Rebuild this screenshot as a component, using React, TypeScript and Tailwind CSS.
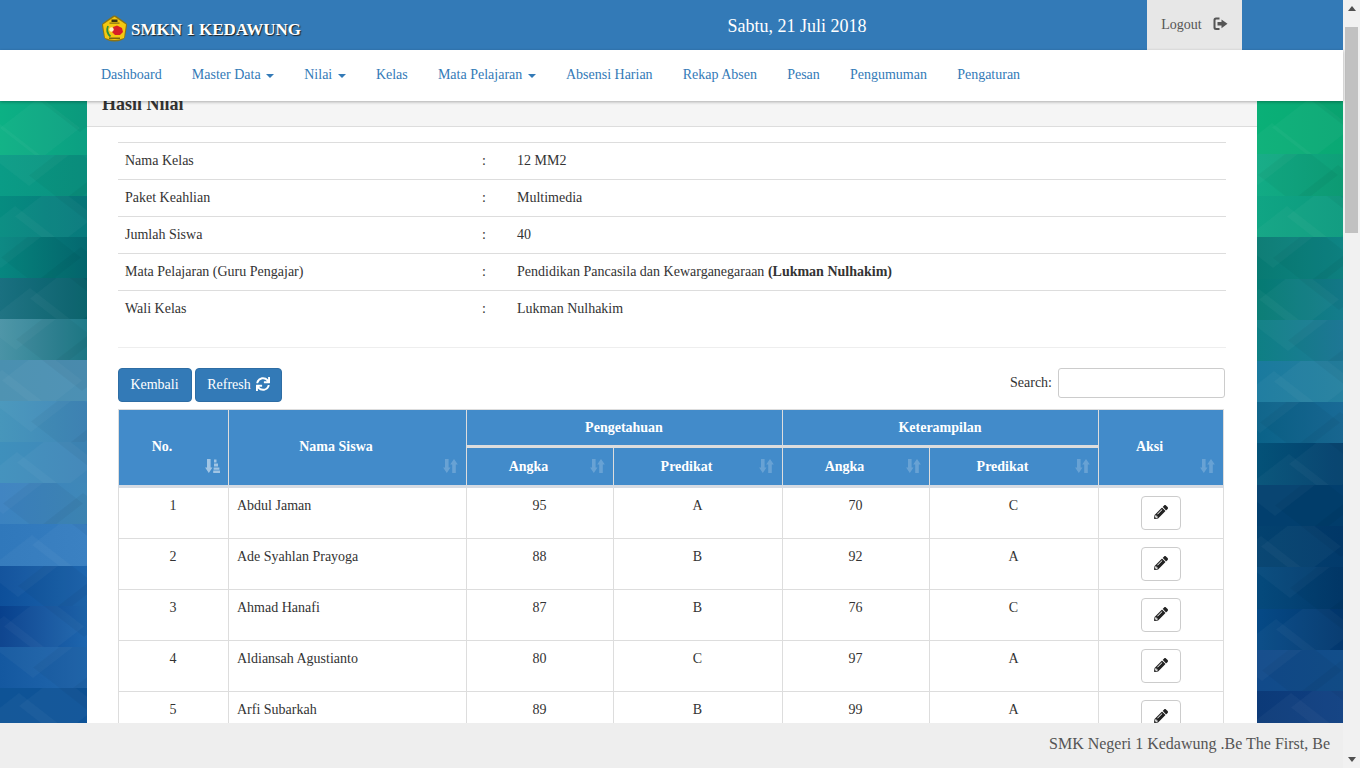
import React from "react";
import { FaPencilAlt, FaSync } from "react-icons/fa";

type B = [number, number, string, string];
const leftBands: B[] = [
  [0, 54, "#0cb184", "#0c9f82"], [54, 41, "#0a9c86", "#0b9180"], [95, 41, "#068c80", "#08797c"], [136, 41, "#078780", "#04686f"],
  [177, 41, "#1a7080", "#045e68"], [218, 41, "#4a93a6", "#1f7a88"], [259, 41, "#4a90b0", "#4c90b4"], [300, 41, "#4796bb", "#3f86b8"],
  [341, 41, "#3f90bc", "#3f86b8"], [382, 41, "#3b82c0", "#3f88b8"], [423, 42, "#3078bb", "#357dc0"], [465, 40, "#0d4f9a", "#1e66ae"],
  [505, 41, "#08408c", "#1e66ae"], [546, 41, "#1458a0", "#2268ae"], [587, 36, "#0e5396", "#0e5398"],
];
const rightBands: B[] = [
  [0, 53, "#0ab077", "#0aa874"], [53, 42, "#12ab85", "#0ea078"], [95, 41, "#10a584", "#0c9a7e"], [136, 42, "#087a72", "#0e8484"],
  [178, 41, "#057a72", "#147c8c"], [219, 41, "#0e7f84", "#1f7b9a"], [260, 41, "#1a7a9e", "#25809f"], [301, 41, "#0a6288", "#196a96"],
  [342, 42, "#045278", "#023f6c"], [384, 41, "#023f6e", "#023f6e"], [425, 41, "#03426f", "#023a6b"], [466, 42, "#054a7c", "#02386a"],
  [508, 41, "#064a86", "#02376e"], [549, 41, "#114a8a", "#124e8a"], [590, 33, "#0c3a78", "#0f3f82"],
];

function Band({ id, bands, w }: { id: string; bands: B[]; w: number }) {
  return (
    <svg width={w} height={623} className="block shrink-0">
      <defs>
        {bands.map((b, i) => (
          <linearGradient key={i} id={`${id}${i}`} x1="0" x2="1" y1="0" y2="0">
            <stop offset="0" stopColor={b[2]} />
            <stop offset="1" stopColor={b[3]} />
          </linearGradient>
        ))}
      </defs>
      {bands.map((b, i) => {
        const off = (i * 29 + (id === "r" ? 15 : 0)) % 43;
        const h = b[1];
        const d = (cx: number, cy: number) => `${cx - 40},${cy} ${cx},${cy - 31} ${cx + 40},${cy} ${cx},${cy + 31}`;
        return (
          <svg key={i} x={0} y={b[0]} width={w} height={h}>
            <rect width={w} height={h} fill={`url(#${id}${i})`} />
            <polygon points={d(off, i % 2 ? 0 : h)} fill="#fff" opacity={0.03} />
            <polygon points={d(off + 40, h / 2)} fill={i % 2 ? "#000" : "#fff"} opacity={0.03} />
            <polygon points={d(off + 80, i % 2 ? h : 0)} fill="#000" opacity={0.035} />
          </svg>
        );
      })}
    </svg>
  );
}

function Logo() {
  return (
    <svg width="27" height="28" viewBox="0 0 27 28" className="block shrink-0">
      <path d="M13.5 .5 Q15 .5 16 1.5 L25 8 Q26.5 9 26 11 L24 22 Q23.5 24 21 25 Q13.5 28 6 25 Q3.5 24 3 22 L1 11 Q.5 9 2 8 L11 1.5 Q12 .5 13.5 .5 Z" fill="#8a7416" />
      <path d="M13.5 1.8 L25 9.4 L23 23 Q13.5 27 4 23 L2 9.4 Z" fill="#f4c811" />
      <rect x="10.5" y="4.5" width="6" height="2.5" fill="#3b3410" />
      <rect x="8.5" y="7.6" width="10" height="1" fill="#6b5d14" />
      <path d="M12 12 L16 10.5 L21 13 L22 17 L19 20 L14 20 L11 17 Z" fill="#d81f26" />
      <path d="M7 11 Q4.5 17 9.5 21.5" stroke="#2c8f3c" strokeWidth="1.8" fill="none" />
      <circle cx="10.5" cy="14.5" r="2.2" fill="#fff4c0" />
      <rect x="8" y="22.6" width="11" height="1.2" fill="#5c4f10" />
    </svg>
  );
}

function LogoutIcon() {
  return (
    <svg width="15" height="14" viewBox="0 0 15 14" className="block">
      <path d="M6.5 0.5 H3 Q0.5 .5 .5 3 V10.5 Q.5 13 3 13 H6.5 V11 H3.2 Q2.5 11 2.5 10.3 V3.2 Q2.5 2.5 3.2 2.5 H6.5 Z" fill="#555" />
      <path d="M4.5 5 H8.5 V2.4 L14.5 6.8 L8.5 11.2 V8.6 H4.5 Z" fill="#555" />
    </svg>
  );
}

function SortIcon({ active }: { active?: boolean }) {
  return (
    <svg width="15" height="14" viewBox="0 0 15 14" className={active ? "absolute right-[8px] bottom-[12px] opacity-50" : "absolute right-[8px] bottom-[12px] opacity-20"}>
      <path d="M2 0 H5.6 V8.5 H7.5 L3.8 14 L.1 8.5 H2 Z" fill="#fff" />
      {active ? (
        <path d="M9 .5 H11.5 V3.5 H9 Z M9 4.5 H13 V7.5 H9 Z M8.6 8.5 H14.4 V10.8 H8.6 Z M8.2 11.5 H15 V14 H8.2 Z" fill="#fff" />
      ) : (
        <path d="M9.2 14 H12.8 V5.5 H14.8 L11 0 L7.2 5.5 H9.2 Z" fill="#fff" />
      )}
    </svg>
  );
}

const navItems: [string, boolean][] = [
  ["Dashboard", false], ["Master Data", true], ["Nilai", true], ["Kelas", false], ["Mata Pelajaran", true],
  ["Absensi Harian", false], ["Rekap Absen", false], ["Pesan", false], ["Pengumuman", false], ["Pengaturan", false],
];

const info: [string, React.ReactNode][] = [
  ["Nama Kelas", "12 MM2"],
  ["Paket Keahlian", "Multimedia"],
  ["Jumlah Siswa", "40"],
  ["Mata Pelajaran (Guru Pengajar)", <>Pendidikan Pancasila dan Kewarganegaraan <b>(Lukman Nulhakim)</b></>],
  ["Wali Kelas", "Lukman Nulhakim"],
];

const rows: [number, string, number, string, number, string][] = [
  [1, "Abdul Jaman", 95, "A", 70, "C"],
  [2, "Ade Syahlan Prayoga", 88, "B", 92, "A"],
  [3, "Ahmad Hanafi", 87, "B", 76, "C"],
  [4, "Aldiansah Agustianto", 80, "C", 97, "A"],
  [5, "Arfi Subarkah", 89, "B", 99, "A"],
];

const th = "relative border border-[#ddd] bg-[#428bca] text-white font-bold text-center p-0 pr-[23px] align-middle";
const thTall = "relative border border-[#ddd] bg-[#428bca] text-white font-bold text-center p-0 pr-[23px] pb-[2px] align-middle";
const td = "border border-[#ddd] p-2 pr-[9px] align-top text-center leading-[20px]";

export default function App() {
  return (
    <div className="flex h-[768px] w-[1360px] overflow-hidden bg-white text-[14px] text-[#333] font-['Liberation_Serif','Times_New_Roman',serif]">
      <div className="flex h-full w-[1343px] flex-col">
        <header className="flex h-[50px] shrink-0 items-center bg-[#337ab7] pl-[101px]">
          <div className="mt-[8px] flex w-[420px] items-center gap-[3px]">
            <Logo />
            <span className="mt-[2px] text-[17px] font-bold whitespace-nowrap text-white [text-shadow:1px_1px_1px_#222]">SMKN 1 KEDAWUNG</span>
          </div>
          <div className="mt-[2px] w-[626px] pr-[74px] text-center text-[18px] text-white">Sabtu, 21 Juli 2018</div>
          <div className="flex h-full w-[95px] items-center justify-center gap-[11px] bg-[#e7e7e7] pb-[2px] text-[#555]">
            <span>Logout</span>
            <LogoutIcon />
          </div>
        </header>
        <nav className="relative z-10 flex h-[51px] shrink-0 items-center gap-[30.15px] bg-white pb-[2px] pl-[101px] text-[#337ab7] shadow-[0_1px_3px_rgba(0,0,0,0.3)]">
          {navItems.map(([label, caret]) => (
            <span key={label} className="flex items-center gap-[5.5px] whitespace-nowrap">
              {label}
              {caret && <span className="mt-[2px] h-0 w-0 border-x-[4px] border-t-[4px] border-x-transparent border-t-[#337ab7]" />}
            </span>
          ))}
        </nav>
        <main className="flex h-[622px] shrink-0 overflow-hidden">
          <Band id="l" bands={leftBands} w={87} />
          <section className="w-[1170px] shrink-0 overflow-hidden bg-white">
            <div className="h-[26px] overflow-hidden border-b border-[#ddd] bg-[#f5f5f5] pl-[15px]">
              <h3 className="-mt-[6px] text-[18px] leading-[18px] font-bold text-[#333]">Hasil Nilai</h3>
            </div>
            <div className="px-[31px] pt-[15px]">
              <table className="w-[1108px] table-fixed border-collapse">
                <colgroup>
                  <col className="w-[356px]" />
                  <col className="w-[35px]" />
                  <col />
                </colgroup>
                <tbody>
                  {info.map(([k, v]) => (
                    <tr key={k} className="border-t border-[#ddd]">
                      <td className="p-2 pl-[7px] leading-[20px]">{k}</td>
                      <td className="p-2 leading-[20px]">:</td>
                      <td className="p-2 leading-[20px]">{v}</td>
                    </tr>
                  ))}
                </tbody>
              </table>
              <hr className="my-[20px] border-0 border-t border-[#eee]" />
              <div className="flex items-start justify-between pr-[1px]">
                <div className="flex gap-[3px]">
                  <button className="h-[34px] w-[74px] rounded border border-[#2e6da4] bg-[#337ab7] pr-[1px] pb-[2px] text-white">Kembali</button>
                  <button className="flex h-[34px] w-[87px] items-center justify-center gap-[4px] rounded border border-[#2e6da4] bg-[#337ab7] pb-[2px] text-white">
                    Refresh <FaSync className="ml-[1px] text-[14px]" />
                  </button>
                </div>
                <label className="flex items-center gap-[6px]">
                  <span className="mb-[2px]">Search:</span>
                  <input readOnly className="h-[30px] w-[167px] rounded-[3px] border border-[#ccc] bg-white" />
                </label>
              </div>
              <table className="mt-[7px] w-[1105px] table-fixed border-collapse">
                <colgroup>
                  <col className="w-[110px]" />
                  <col className="w-[238px]" />
                  <col className="w-[147px]" />
                  <col className="w-[169px]" />
                  <col className="w-[147px]" />
                  <col className="w-[169px]" />
                  <col className="w-[125px]" />
                </colgroup>
                <thead>
                  <tr className="h-[37px]">
                    <th rowSpan={2} className={thTall}>No.<SortIcon active /></th>
                    <th rowSpan={2} className={thTall}>Nama Siswa<SortIcon /></th>
                    <th colSpan={2} className="border border-b-[3px] border-[#ddd] bg-[#428bca] p-0 pr-[1px] text-center font-bold text-white">Pengetahuan</th>
                    <th colSpan={2} className="border border-b-[3px] border-[#ddd] bg-[#428bca] p-0 pr-[1px] text-center font-bold text-white">Keterampilan</th>
                    <th rowSpan={2} className={thTall}>Aksi<SortIcon /></th>
                  </tr>
                  <tr className="h-[40px] border-b-[3px] border-[#d5dbe3]">
                    {["Angka", "Predikat", "Angka", "Predikat"].map((t, i) => (
                      <th key={i} className={th}>{t}<SortIcon /></th>
                    ))}
                  </tr>
                </thead>
                <tbody>
                  {rows.map((r) => (
                    <tr key={r[0]}>
                      <td className={td}>{r[0]}</td>
                      <td className="border border-[#ddd] p-2 align-top leading-[20px]">{r[1]}</td>
                      <td className={td}>{r[2]}</td>
                      <td className={td}>{r[3]}</td>
                      <td className={td}>{r[4]}</td>
                      <td className={td}>{r[5]}</td>
                      <td className="border border-[#ddd] p-2 pr-[9px] text-center align-top">
                        <button className="inline-flex h-[34px] w-[40px] items-center justify-center rounded border border-[#ccc] bg-white pb-[3px] text-[#222]">
                          <FaPencilAlt className="text-[14px]" />
                        </button>
                      </td>
                    </tr>
                  ))}
                </tbody>
              </table>
            </div>
          </section>
          <Band id="r" bands={rightBands} w={86} />
        </main>
        <footer className="flex h-[45px] shrink-0 items-center justify-end overflow-hidden bg-[#eee] pr-[13px] pb-[4px] text-[16px] whitespace-nowrap text-[#555]">
          SMK Negeri 1 Kedawung .Be The First, Be
        </footer>
      </div>
      <div className="flex h-full w-[17px] shrink-0 flex-col items-center justify-between bg-[#f1f1f1] py-[6px]">
        <span className="h-0 w-0 border-x-[4px] border-b-[5px] border-x-transparent border-b-[#505050]" />
        <div className="absolute top-[27px] h-[206px] w-[13px] bg-[#c1c1c1]" />
        <span className="h-0 w-0 border-x-[4px] border-t-[5px] border-x-transparent border-t-[#505050]" />
      </div>
    </div>
  );
}
